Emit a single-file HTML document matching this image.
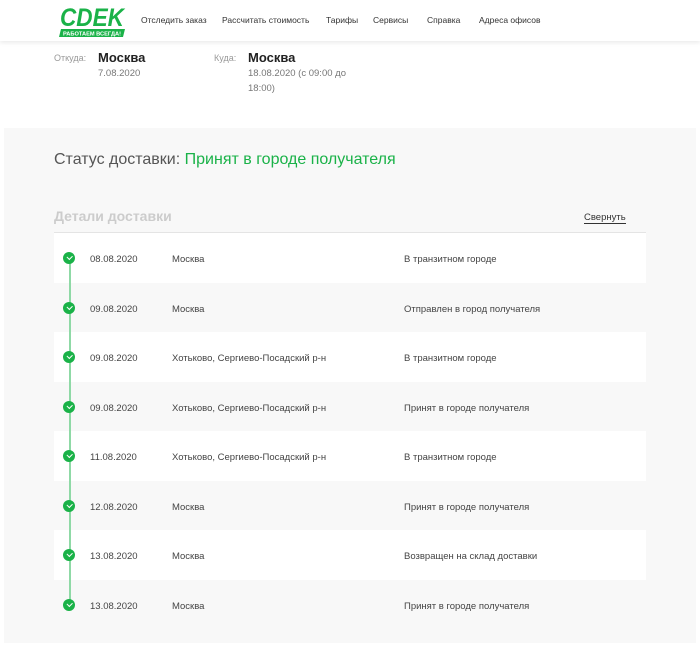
<!DOCTYPE html>
<html><head><meta charset="utf-8"><style>
*{margin:0;padding:0;box-sizing:border-box}
body{width:700px;height:647px;background:#fff;font-family:"Liberation Sans",sans-serif;position:relative;overflow:hidden;color:#333}
.hdr{position:absolute;left:0;top:0;width:700px;height:41px;background:#fff;box-shadow:0 2px 4px rgba(0,0,0,.08)}
.nav{position:absolute;top:15px;font-size:8.5px;color:#333}
.lbl{position:absolute;font-size:9px;color:#999}
.big{position:absolute;font-size:13px;font-weight:bold;color:#222}
.sm{position:absolute;font-size:9.5px;color:#777;line-height:15px}
.panel{position:absolute;left:4px;top:128px;width:692px;height:515px;background:#f8f8f8}
.row{position:absolute;left:54px;width:592px;height:49.7px;font-size:9.5px;color:#444}
.row span{position:absolute;top:21px}
.dot{position:absolute;left:9px;top:19px;width:12px;height:12px;border-radius:50%;background:#1ab248;z-index:2}
.dot:after{content:"";position:absolute;left:3.5px;top:2.5px;width:4px;height:2.5px;border-left:1.2px solid #fff;border-bottom:1.2px solid #fff;transform:rotate(-45deg)}
.line{position:absolute;left:69px;top:259px;width:2px;height:348px;background:#8fd9a6;z-index:1}
</style></head><body>
<div class="hdr">
<svg style="position:absolute;left:58px;top:5px" width="70" height="32" viewBox="0 0 70 32">
<text x="2" y="21" font-family="Liberation Sans" font-weight="bold" font-style="italic" font-size="25" fill="#1ab248" textLength="64" lengthAdjust="spacingAndGlyphs">CDEK</text>
<polygon points="3,24 67,24 65,32 1,32" fill="#1ab248"/>
<text x="5" y="30.5" font-family="Liberation Sans" font-weight="bold" font-size="5.5" fill="#fff" textLength="58" lengthAdjust="spacingAndGlyphs">РАБОТАЕМ ВСЕГДА!</text>
</svg>
<div class="nav" style="left:141px">Отследить заказ</div>
<div class="nav" style="left:222px">Рассчитать стоимость</div>
<div class="nav" style="left:326px">Тарифы</div>
<div class="nav" style="left:373px">Сервисы</div>
<div class="nav" style="left:427px">Справка</div>
<div class="nav" style="left:479px">Адреса офисов</div>
</div>
<div class="lbl" style="left:54px;top:53px">Откуда:</div>
<div class="big" style="left:98px;top:50px">Москва</div>
<div class="sm" style="left:98px;top:66px">7.08.2020</div>
<div class="lbl" style="left:214px;top:53px">Куда:</div>
<div class="big" style="left:248px;top:50px">Москва</div>
<div class="sm" style="left:248px;top:66px">18.08.2020 (с 09:00 до<br>18:00)</div>
<div class="panel"></div>
<div style="position:absolute;left:54px;top:151px;font-size:16px;color:#555">Статус доставки: <span style="color:#1ab248">Принят в городе получателя</span></div>
<div style="position:absolute;left:54px;top:208px;font-size:14px;font-weight:bold;color:#ccc">Детали доставки</div>
<div style="position:absolute;left:584px;top:212px;font-size:9.5px;color:#333;border-bottom:1px solid #333;line-height:11px">Свернуть</div>
<div style="position:absolute;left:54px;top:232px;width:592px;height:1px;background:#e4e4e4"></div>
<div class="row" style="top:233px;background:#fff"><div class="dot"></div><span style="left:36px">08.08.2020</span><span style="left:118px">Москва</span><span style="left:350px">В транзитном городе</span></div>
<div class="row" style="top:283px"><div class="dot"></div><span style="left:36px">09.08.2020</span><span style="left:118px">Москва</span><span style="left:350px">Отправлен в город получателя</span></div>
<div class="row" style="top:332px;background:#fff"><div class="dot"></div><span style="left:36px">09.08.2020</span><span style="left:118px">Хотьково, Сергиево-Посадский р-н</span><span style="left:350px">В транзитном городе</span></div>
<div class="row" style="top:382px"><div class="dot"></div><span style="left:36px">09.08.2020</span><span style="left:118px">Хотьково, Сергиево-Посадский р-н</span><span style="left:350px">Принят в городе получателя</span></div>
<div class="row" style="top:431px;background:#fff"><div class="dot"></div><span style="left:36px">11.08.2020</span><span style="left:118px">Хотьково, Сергиево-Посадский р-н</span><span style="left:350px">В транзитном городе</span></div>
<div class="row" style="top:481px"><div class="dot"></div><span style="left:36px">12.08.2020</span><span style="left:118px">Москва</span><span style="left:350px">Принят в городе получателя</span></div>
<div class="row" style="top:530px;background:#fff"><div class="dot"></div><span style="left:36px">13.08.2020</span><span style="left:118px">Москва</span><span style="left:350px">Возвращен на склад доставки</span></div>
<div class="row" style="top:580px"><div class="dot"></div><span style="left:36px">13.08.2020</span><span style="left:118px">Москва</span><span style="left:350px">Принят в городе получателя</span></div>
<div class="line"></div>
</body></html>
